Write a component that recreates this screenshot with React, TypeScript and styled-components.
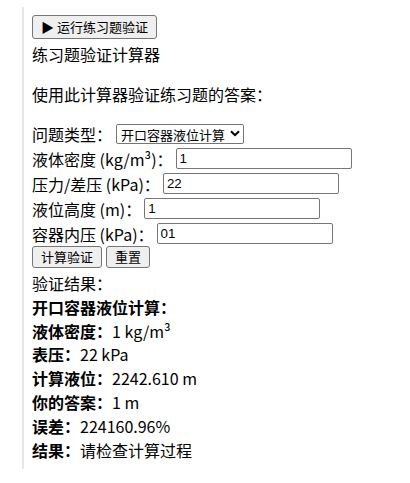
import React, { useState } from "react";
import styled, { createGlobalStyle } from "styled-components";

const GlobalStyle = createGlobalStyle`
  body {
    margin: 0;
    background: #ffffff;
    color: #000000;
    font-family: "Noto Sans CJK SC", "Noto Sans", sans-serif;
    font-size: 16px;
  }
`;

const Panel = styled.div`
  margin: 7px 0 0 22px;
  padding: 8px 0 7px 8px;
  border-left: 2px solid #e6e6e6;
  display: flex;
  flex-direction: column;
  align-items: flex-start;
`;

const Button = styled.button<{ $tall?: boolean }>`
  font-family: "Noto Sans CJK SC", sans-serif;
  font-size: 13px;
  line-height: 18px;
  color: #000;
  background: #efefef;
  border: 1px solid #767676;
  border-radius: 3px;
  padding: ${(p) => (p.$tall ? "2px 8px" : "1px 8px")};
  cursor: pointer;
`;

const Title = styled.div`
  margin-top: 3px;
  line-height: 24px;
`;

const Intro = styled.p`
  margin: 16px 0;
  line-height: 24px;
`;

const Row = styled.div`
  display: flex;
  align-items: center;
  gap: 3px;
  height: 25px;
`;

const TypeRow = styled(Row)`
  height: 24px;
  gap: 4px;
`;

const SelectWrap = styled.span`
  position: relative;
  display: inline-flex;
`;

const Select = styled.select`
  appearance: none;
  font-family: "Noto Sans CJK SC", sans-serif;
  font-size: 13px;
  line-height: 17px;
  height: 20px;
  width: 128px;
  padding: 0 18px 0 4px;
  color: #000;
  background: #fff;
  border: 1px solid #767676;
  border-radius: 2px;
`;

const Chevron = styled.svg`
  position: absolute;
  right: 4px;
  top: 6px;
  pointer-events: none;
`;

const Input = styled.input`
  box-sizing: border-box;
  width: 176px;
  height: 21px;
  padding: 1px 3px;
  font-family: "Liberation Sans", Arial, sans-serif;
  font-size: 13.33px;
  color: #000;
  border: 1px solid #767676;
  border-radius: 2px;
`;

const Actions = styled.div`
  display: flex;
  gap: 4px;
`;

const Results = styled.div`
  margin-top: 4px;
  line-height: 23.8px;
`;

const Line = styled.div``;

const Strong = styled.b`
  font-weight: 700;
`;

const fields = [
  { label: "液体密度 (kg/m³)：", value: "1" },
  { label: "压力/差压 (kPa)：", value: "22" },
  { label: "液位高度 (m)：", value: "1" },
  { label: "容器内压 (kPa)：", value: "01" },
];

const results = [
  { label: "液体密度：", value: "1 kg/m³" },
  { label: "表压：", value: "22 kPa" },
  { label: "计算液位：", value: "2242.610 m" },
  { label: "你的答案：", value: "1 m" },
  { label: "误差：", value: "224160.96%" },
  { label: "结果：", value: "请检查计算过程" },
];

export default function App() {
  const [values, setValues] = useState(fields.map((f) => f.value));

  return (
    <>
      <GlobalStyle />
      <Panel>
        <Button $tall>▶ 运行练习题验证</Button>
        <Title>练习题验证计算器</Title>
        <Intro>使用此计算器验证练习题的答案：</Intro>
        <TypeRow>
          <span>问题类型：</span>
          <SelectWrap>
            <Select defaultValue="open">
              <option value="open">开口容器液位计算</option>
              <option value="closed">密闭容器液位计算</option>
            </Select>
            <Chevron width="10" height="7" viewBox="0 0 10 7">
              <path d="M1 1.2 L5 5.2 L9 1.2" fill="none" stroke="#000" strokeWidth="2" />
            </Chevron>
          </SelectWrap>
        </TypeRow>
        {fields.map((f, i) => (
          <Row key={f.label}>
            <span>{f.label}</span>
            <Input
              value={values[i]}
              onChange={(e) => {
                const next = [...values];
                next[i] = e.target.value;
                setValues(next);
              }}
            />
          </Row>
        ))}
        <Actions>
          <Button>计算验证</Button>
          <Button>重置</Button>
        </Actions>
        <Results>
          <Line>验证结果：</Line>
          <Line>
            <Strong>开口容器液位计算：</Strong>
          </Line>
          {results.map((r) => (
            <Line key={r.label}>
              <Strong>{r.label}</Strong>
              {r.value}
            </Line>
          ))}
        </Results>
      </Panel>
    </>
  );
}
